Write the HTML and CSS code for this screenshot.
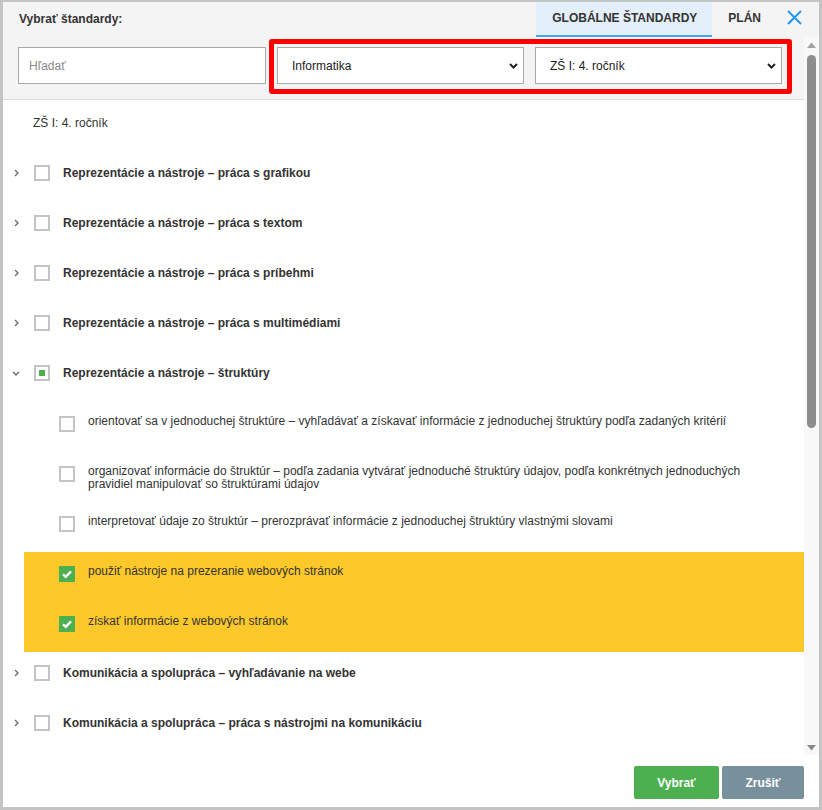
FILE: index.html
```html
<!DOCTYPE html>
<html lang="sk">
<head>
<meta charset="utf-8">
<title>Vybrať štandardy</title>
<link rel="stylesheet" href="styles.css">
</head>
<body>
<div class="modal">
  <div class="titlebar">
    <div class="title">Vybrať štandardy:</div>
    <div class="tabs">
      <div class="tab active">GLOBÁLNE ŠTANDARDY</div>
      <div class="tab">PLÁN</div>
    </div>
    <div class="close"><svg width="15" height="15" viewBox="0 0 15 15"><path d="M1 1 L14 14 M14 1 L1 14" stroke="#2196f3" stroke-width="2" fill="none"/></svg></div>
  </div>
  <div class="body">
    <div class="main">
      <div class="filters">
        <input class="search" type="text" placeholder="Hľadať">
        <div class="highlight">
          <div class="select"><span>Informatika</span><svg width="9" height="6" viewBox="0 0 9 6"><path d="M1 1 L4.5 4.5 L8 1" stroke="#222" stroke-width="2" fill="none"/></svg></div>
          <div class="select"><span>ZŠ I: 4. ročník</span><svg width="9" height="6" viewBox="0 0 9 6"><path d="M1 1 L4.5 4.5 L8 1" stroke="#222" stroke-width="2" fill="none"/></svg></div>
        </div>
      </div>
      <div class="list">
        <div class="level-label">ZŠ I: 4. ročník</div>

        <div class="row">
          <span class="chev"><svg width="5" height="8" viewBox="0 0 5 8"><path d="M1 1 L4 4 L1 7" stroke="#666" stroke-width="1.3" fill="none"/></svg></span>
          <span class="cb"></span>
          <span class="row-text">Reprezentácie a nástroje – práca s grafikou</span>
        </div>
        <div class="row">
          <span class="chev"><svg width="5" height="8" viewBox="0 0 5 8"><path d="M1 1 L4 4 L1 7" stroke="#666" stroke-width="1.3" fill="none"/></svg></span>
          <span class="cb"></span>
          <span class="row-text">Reprezentácie a nástroje – práca s textom</span>
        </div>
        <div class="row">
          <span class="chev"><svg width="5" height="8" viewBox="0 0 5 8"><path d="M1 1 L4 4 L1 7" stroke="#666" stroke-width="1.3" fill="none"/></svg></span>
          <span class="cb"></span>
          <span class="row-text">Reprezentácie a nástroje – práca s príbehmi</span>
        </div>
        <div class="row">
          <span class="chev"><svg width="5" height="8" viewBox="0 0 5 8"><path d="M1 1 L4 4 L1 7" stroke="#666" stroke-width="1.3" fill="none"/></svg></span>
          <span class="cb"></span>
          <span class="row-text">Reprezentácie a nástroje – práca s multimédiami</span>
        </div>
        <div class="row">
          <span class="chev"><svg class="down" width="8" height="5" viewBox="0 0 8 5"><path d="M1 1 L4 4 L7 1" stroke="#666" stroke-width="1.3" fill="none"/></svg></span>
          <span class="cb partial"><span class="dot"></span></span>
          <span class="row-text">Reprezentácie a nástroje – štruktúry</span>
        </div>

        <div class="sub">
          <span class="cb"></span>
          <span class="sub-text">orientovať sa v jednoduchej štruktúre – vyhľadávať a získavať informácie z jednoduchej štruktúry podľa zadaných kritérií</span>
        </div>
        <div class="sub">
          <span class="cb"></span>
          <span class="sub-text">organizovať informácie do štruktúr – podľa zadania vytvárať jednoduché štruktúry údajov, podľa konkrétnych jednoduchých pravidiel manipulovať so štruktúrami údajov</span>
        </div>
        <div class="sub">
          <span class="cb"></span>
          <span class="sub-text">interpretovať údaje zo štruktúr – prerozprávať informácie z jednoduchej štruktúry vlastnými slovami</span>
        </div>

        <div class="selected-group">
          <div class="sub">
            <span class="cb checked"><svg width="16" height="16" viewBox="0 0 16 16"><path d="M4 8.3 L6.8 10.8 L12 5.4" stroke="#fff" stroke-width="2.4" fill="none"/></svg></span>
            <span class="sub-text">použiť nástroje na prezeranie webových stránok</span>
          </div>
          <div class="sub">
            <span class="cb checked"><svg width="16" height="16" viewBox="0 0 16 16"><path d="M4 8.3 L6.8 10.8 L12 5.4" stroke="#fff" stroke-width="2.4" fill="none"/></svg></span>
            <span class="sub-text">získať informácie z webových stránok</span>
          </div>
        </div>

        <div class="row">
          <span class="chev"><svg width="5" height="8" viewBox="0 0 5 8"><path d="M1 1 L4 4 L1 7" stroke="#666" stroke-width="1.3" fill="none"/></svg></span>
          <span class="cb"></span>
          <span class="row-text">Komunikácia a spolupráca – vyhľadávanie na webe</span>
        </div>
        <div class="row">
          <span class="chev"><svg width="5" height="8" viewBox="0 0 5 8"><path d="M1 1 L4 4 L1 7" stroke="#666" stroke-width="1.3" fill="none"/></svg></span>
          <span class="cb"></span>
          <span class="row-text">Komunikácia a spolupráca – práca s nástrojmi na komunikáciu</span>
        </div>
      </div>
    </div>
    <div class="scrollbar">
      <div class="sb-btn"><svg width="9" height="6" viewBox="0 0 9 6"><polygon points="0,6 4.5,0.5 9,6" fill="#a3a3a3"/></svg></div>
      <div class="sb-track"><div class="sb-thumb"></div></div>
      <div class="sb-btn"><svg width="9" height="6" viewBox="0 0 9 6"><polygon points="0,0 9,0 4.5,5.5" fill="#8a8a8a"/></svg></div>
    </div>
  </div>
  <div class="footer">
    <button class="btn btn-ok">Vybrať</button>
    <button class="btn btn-cancel">Zrušiť</button>
  </div>
</div>
</body>
</html>
```
FILE: styles.css
```css
* { box-sizing: border-box; }
html, body { margin: 0; padding: 0; }
body {
  font-family: "Liberation Sans", Arial, sans-serif;
  font-size: 12px;
  color: #333;
  background: #fff;
}
.modal {
  width: 822px;
  height: 810px;
  border: 3px solid #c4c4c4;
  border-top-width: 2px;
  display: flex;
  flex-direction: column;
  overflow: hidden;
  background: #fff;
}
.titlebar {
  height: 35px;
  flex: none;
  background: #f4f4f4;
  display: flex;
  align-items: stretch;
  padding-left: 16px;
}
.title {
  align-self: center;
  font-weight: bold;
  color: #333;
  margin-top: -2px;
}
.tabs {
  margin-left: auto;
  display: flex;
}
.tab {
  display: flex;
  align-items: center;
  padding: 0 15px 1px;
  font-weight: bold;
  color: #333;
  border-bottom: 2px solid transparent;
}
.tab.active {
  background: #e3f0fb;
  border-bottom-color: #42a5f5;
  padding-left: 16px;
}
.tab + .tab { padding-left: 16px; padding-right: 14px; }
.close {
  align-self: center;
  width: 15px;
  height: 15px;
  margin: -4px 17px 0 12px;
  display: flex;
}
.body {
  flex: 1;
  display: flex;
  overflow: hidden;
}
.main {
  flex: 1;
  overflow: hidden;
  background: #fff;
}
.filters {
  background: #f4f4f4;
  border-bottom: 1px solid #dcdcdc;
  padding: 10px 0 15px 15px;
  display: flex;
  align-items: center;
}
.search {
  width: 248px;
  height: 37px;
  border: 1px solid #a9a9a9;
  background: #fff;
  padding: 0 10px;
  font-family: inherit;
  font-size: 12px;
  color: #333;
  outline: none;
  margin: 0;
}
.search::placeholder { color: #8a8a8a; }
.highlight {
  display: flex;
  gap: 11px;
  border: 5px solid #ff0000;
  border-radius: 3px;
  padding: 3px 5px 5px 3px;
  margin: -8px 0 -10px 3px;
}
.select {
  width: 247px;
  height: 37px;
  border: 1px solid #a9a9a9;
  background: #fff;
  display: flex;
  align-items: center;
  justify-content: space-between;
  padding: 0 5px 0 14px;
  color: #222;
}
.list {
  padding-top: 16px;
}
.level-label {
  padding-left: 30px;
  line-height: 14px;
  margin-bottom: 22px;
}
.row {
  height: 50px;
  display: flex;
  align-items: flex-start;
  padding: 14px 0 0 8px;
  line-height: 14px;
}
.chev {
  width: 23px;
  height: 14px;
  display: flex;
  align-items: center;
  padding-left: 3px;
}
.chev .down { margin-left: -2px; }
.cb {
  width: 16px;
  height: 16px;
  flex: none;
  border: 2px solid #c4c4c4;
  background: #fff;
  display: flex;
  align-items: center;
  justify-content: center;
}
.row .cb { margin-top: -1px; }
.cb.partial .dot {
  width: 6px;
  height: 6px;
  background: #4caf50;
}
.cb.checked {
  border: none;
  background: #4caf50;
}
.row-text {
  font-weight: bold;
  margin-left: 13px;
}
.sub {
  min-height: 50px;
  display: flex;
  align-items: flex-start;
  padding: 13px 34px 0 35px;
  margin-left: 21px;
  line-height: 13px;
}
.sub .cb { margin-top: 1px; }
.sub-text {
  margin-left: 13px;
}
.selected-group {
  background: #fdc82a;
  margin-left: 21px;
}
.selected-group .sub { margin-left: 0; }
.scrollbar {
  width: 15px;
  flex: none;
  background: #f8f8f8;
  display: flex;
  flex-direction: column;
}
.sb-btn {
  height: 15px;
  display: flex;
  align-items: center;
  justify-content: center;
}
.sb-track {
  flex: 1;
  padding: 3px 3px 0 3px;
}
.sb-thumb {
  width: 9px;
  height: 373px;
  background: #8d8d8d;
  border-radius: 5px;
}
.footer {
  height: 52px;
  flex: none;
  display: flex;
  justify-content: flex-end;
  align-items: flex-start;
  gap: 3px;
  padding: 11px 15px 0 0;
  background: #fff;
}
.btn {
  height: 33px;
  border: none;
  border-radius: 2px;
  color: #fff;
  font-family: inherit;
  font-size: 12px;
  font-weight: bold;
  cursor: pointer;
  padding: 0;
}
.btn-ok { width: 85px; background: #4caf50; }
.btn-cancel { width: 82px; background: #78909c; }
```
